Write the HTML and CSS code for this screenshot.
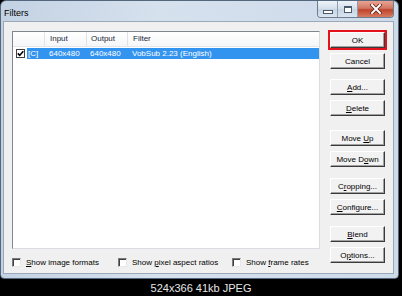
FILE: index.html
```html
<!DOCTYPE html>
<html lang="en">

<head>
  <meta charset="UTF-8">
  <title>Filters</title>
  <link rel="stylesheet" href="styles.css">
</head>

<body>
  <div class="window">
    <div class="titlebar">
      <span class="title">Filters</span>
      <div class="caption-buttons">
        <div class="cap cap-min"><span class="min-icon"></span></div>
        <div class="cap cap-max"><span class="max-icon"></span></div>
        <div class="cap cap-close">
          <svg width="12" height="10" viewBox="0 0 12 10">
            <path d="M2 1 L10 9 M10 1 L2 9" stroke="#5a1a12" stroke-width="3.4" stroke-linecap="square" />
            <path d="M2 1 L10 9 M10 1 L2 9" stroke="#fff" stroke-width="2" stroke-linecap="square" />
          </svg>
        </div>
      </div>
    </div>

    <div class="client">
      <div class="left">
        <div class="listbox">
          <div class="header">
            <div class="hcell c0"></div>
            <div class="hcell c1">Input</div>
            <div class="hcell c2">Output</div>
            <div class="hcell c3">Filter</div>
          </div>
          <div class="row">
            <div class="check-cell">
              <span class="box checked">
                <svg width="7" height="7" viewBox="0 0 7 7">
                  <path d="M0.8 3.4 L2.7 5.4 L6.3 1.2" stroke="#000" stroke-width="1.6" fill="none" />
                </svg>
              </span>
            </div>
            <div class="selected">
              <span class="cell s0">[C]</span>
              <span class="cell s1">640x480</span>
              <span class="cell s2">640x480</span>
              <span class="cell s3">VobSub 2.23 (English)</span>
            </div>
          </div>
        </div>

        <div class="options-row">
          <label class="opt opt1"><span class="box"></span><span><u>S</u>how image formats</span></label>
          <label class="opt opt2"><span class="box"></span><span>Show <u>p</u>ixel aspect ratios</span></label>
          <label class="opt"><span class="box"></span><span>Show <u>f</u>rame rates</span></label>
        </div>
      </div>

      <div class="buttons">
        <button class="btn btn-ok">OK</button>
        <button class="btn">Cancel</button>
        <button class="btn group"><u>A</u>dd...</button>
        <button class="btn"><u>D</u>elete</button>
        <button class="btn group">Move <u>U</u>p</button>
        <button class="btn">Move D<u>o</u>wn</button>
        <button class="btn group">C<u>r</u>opping...</button>
        <button class="btn"><u>C</u>onfigure...</button>
        <button class="btn group"><u>B</u>lend</button>
        <button class="btn">O<u>p</u>tions...</button>
      </div>
    </div>
  </div>

  <div class="caption">524x366 41kb JPEG</div>
</body>

</html>
```

FILE: styles.css
```css
body {
  margin: 0;
  padding: 0;
  background-color: #000;
  font-family: "Liberation Sans", Arial, sans-serif;
  width: 402px;
  height: 296px;
  overflow: hidden;
}

.window {
  width: 397px;
  height: 277px;
  border: 1px solid #55677c;
  border-radius: 6px 6px 4px 4px;
  background: linear-gradient(to right, #c3d2e3, #d6e1ee 40%, #cddaea);
  display: flex;
  flex-direction: column;
}

.titlebar {
  height: 20px;
  display: flex;
  align-items: flex-start;
}

.title {
  font-size: 9px;
  color: #000;
  margin: 7px 0 0 3px;
}

.caption-buttons {
  margin-left: auto;
  margin-right: 4px;
  display: flex;
  height: 16px;
  border: 1px solid #6d7d90;
  border-top: 0;
  border-radius: 0 0 4px 4px;
  overflow: hidden;
}

.cap {
  height: 16px;
  display: flex;
  align-items: center;
  justify-content: center;
}

.cap-min,
.cap-max {
  width: 19px;
  background: linear-gradient(#eef3f9, #d3deea 50%, #c4d3e4 51%, #dbe5f0);
  border-right: 1px solid #8e9db0;
}

.min-icon {
  width: 8px;
  height: 2px;
  border: 1px solid #4b5a6b;
  background: #fff;
  margin-top: 5px;
}

.max-icon {
  width: 6px;
  height: 4px;
  border: 1px solid #4b5a6b;
  border-top-width: 2px;
  background: #fff;
}

.cap-close {
  width: 35px;
  background: linear-gradient(#e8a493, #d27764 45%, #c0442c 55%, #d77b60);
}

.client {
  flex: 1;
  margin: 0 4px 4px 2px;
  background-color: #f0f0f0;
  border: 1px solid #9aa8b8;
  display: flex;
  gap: 10px;
  padding: 9px 7px 6px 8px;
}

.left {
  width: 308px;
  display: flex;
  flex-direction: column;
}

.listbox {
  flex: 1;
  background: #fff;
  border: 1px solid;
  border-color: #7f8690 #d9dde2 #d9dde2 #7f8690;
}

.header {
  display: flex;
  height: 14px;
  border-bottom: 1px solid #e3e6ea;
  background: linear-gradient(#fff, #f5f6f7);
  font-size: 8px;
  color: #1b2a3c;
}

.hcell {
  border-right: 1px solid #dfe3e8;
  line-height: 14px;
  padding-left: 5px;
}

.c0 {
  width: 26px;
}

.c1 {
  width: 36px;
}

.c2 {
  width: 36px;
  padding-left: 4px;
}

.c3 {
  flex: 1;
  border-right: 0;
}

.row {
  display: flex;
  height: 13px;
  font-size: 8px;
}

.check-cell {
  width: 14px;
  display: flex;
  align-items: center;
}

.box {
  width: 7px;
  height: 7px;
  background: #fff;
  border: 1px solid #404040;
  display: inline-flex;
  align-items: center;
  justify-content: center;
}

.check-cell .box {
  margin-left: 3px;
}

.selected {
  flex: 1;
  background-color: #3394f0;
  color: #fff;
  display: flex;
  margin: 1px 0;
  line-height: 11px;
}

.cell {
  padding-left: 1px;
}

.s0 {
  width: 16px;
}

.s1 {
  width: 37px;
  padding-left: 5px;
}

.s2 {
  width: 37px;
  padding-left: 4px;
}

.s3 {
  padding-left: 5px;
}

.options-row {
  display: flex;
  align-items: center;
  height: 10px;
  margin-top: 8px;
  font-size: 8px;
  color: #000;
}

.opt {
  display: flex;
  align-items: center;
  gap: 5px;
}

.opt .box {
  border-color: #7a7a7a #e8e8e8 #e8e8e8 #7a7a7a;
  box-shadow: inset 1px 1px #404040;
}

.opt1 {
  width: 106px;
}

.opt2 {
  width: 114px;
}

.buttons {
  width: 55px;
  display: flex;
  flex-direction: column;
  gap: 5px;
  padding-top: 1px;
}

.btn {
  height: 16px;
  width: 55px;
  padding: 0;
  font-family: "Liberation Sans", Arial, sans-serif;
  font-size: 8px;
  color: #000;
  background: #f2f2f2;
  border: 1px solid;
  border-color: #fff #3a3a3a #3a3a3a #fff;
  box-shadow: inset -1px -1px #a0a0a0;
}

.btn.group {
  margin-top: 6px;
}

.btn:nth-child(3) {
  margin-top: 5px;
}

.btn:nth-child(5) {
  margin-top: 9px;
}

.btn-ok {
  outline: 2px solid #e3121c;
}

.caption {
  text-align: center;
  color: #e6e6e6;
  font-size: 11px;
  line-height: 18px;
}
```
